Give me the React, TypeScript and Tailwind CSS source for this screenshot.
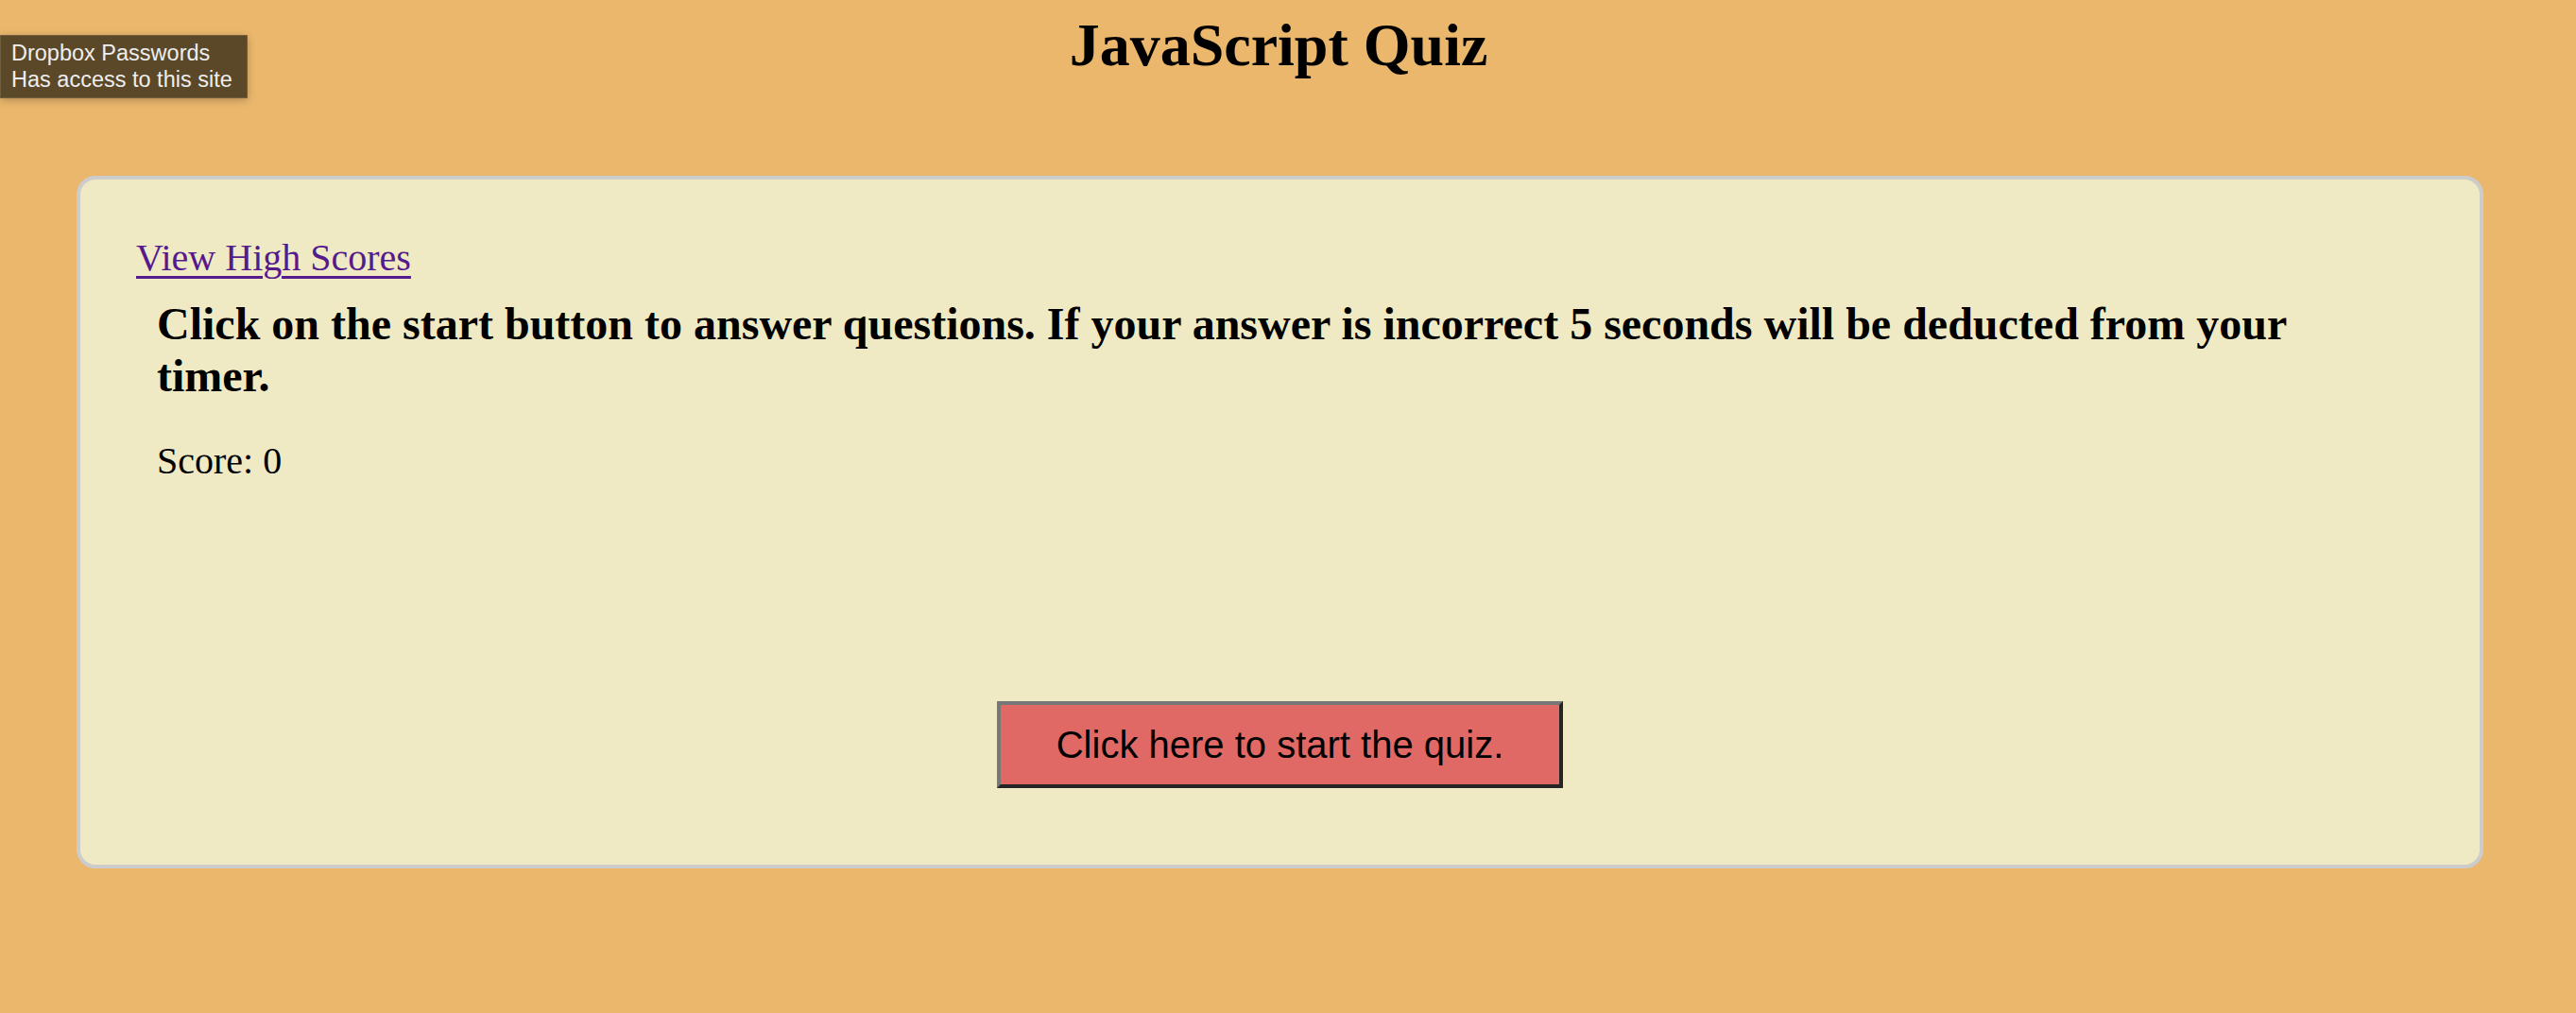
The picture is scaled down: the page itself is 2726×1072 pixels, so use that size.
export default function App() {
  return (
    <main className="relative min-h-screen bg-[#ebb76d] pr-[20px] pt-[11px] font-['Liberation_Serif',serif] text-black">
      <h1 className="text-center text-[64px] font-bold leading-[74px]">JavaScript Quiz</h1>

      <section className="ml-[81px] mr-[78px] mt-[101px] rounded-[20px] border-[4px] border-[#cccccc] bg-[#f0eac4] pb-[81px] pt-[60px]">
        <div className="pl-[59px] text-[40px] leading-[46px]">
          <a href="#" className="text-[#551a8b] underline decoration-[3px] underline-offset-[6px]">
            View High Scores
          </a>
        </div>

        <div className="pl-[81px]">
          <h2 className="mt-[19px] w-[2334px] text-[48px] font-bold leading-[55px]">
            Click on the start button to answer questions. If your answer is incorrect 5 seconds will be deducted from your timer.
          </h2>
          <p className="mt-[40px] text-[40px] leading-[46px]">Score: 0</p>
        </div>

        <div className="mt-[231px] flex justify-center">
          <button
            type="button"
            className="h-[92px] w-[599px] border-[4px] border-b-[#252525] border-l-[#777777] border-r-[#252525] border-t-[#777777] bg-[#e06966] font-['Liberation_Sans',Arial,sans-serif] text-[40px] leading-[46px] text-black"
          >
            Click here to start the quiz.
          </button>
        </div>
      </section>

      {/* browser extension tooltip overlay */}
      <div className="absolute left-0 top-[37px] h-[67px] w-[262px] border border-[#6e5e3e] bg-[#5a4828] pl-[11px] pt-[4px] font-['Liberation_Sans',Arial,sans-serif] text-[23.5px] leading-[28px] text-[#eeeeee] shadow-[0_2px_8px_rgba(0,0,0,0.25)]">
        <div>Dropbox Passwords</div>
        <div>Has access to this site</div>
      </div>
    </main>
  );
}
